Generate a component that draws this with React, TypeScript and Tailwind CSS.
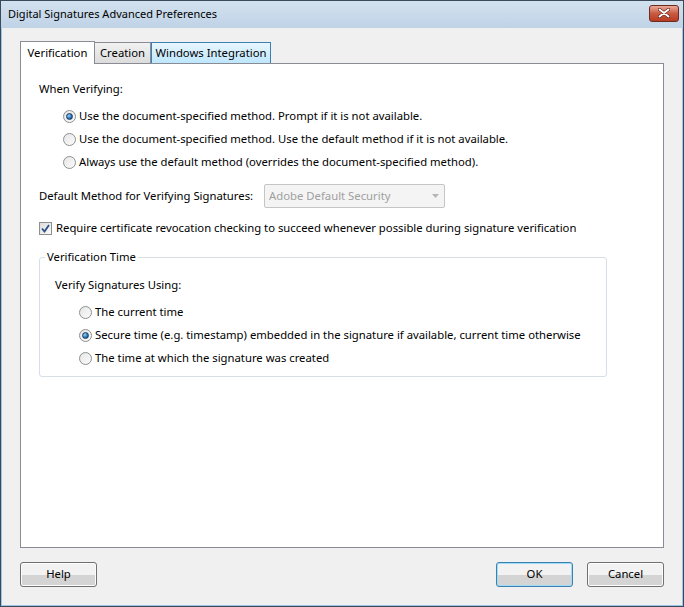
import React from "react";

function Radio({ checked }: { checked?: boolean }) {
  return (
    <span className="inline-flex h-[13px] w-[13px] shrink-0 items-center justify-center rounded-full border border-[#8e8f8f] bg-gradient-to-br from-[#e6e6e6] to-[#fbfbfb]">
      {checked ? (
        <span className="h-[7px] w-[7px] rounded-full border border-[#1b3e63] bg-[radial-gradient(circle_at_35%_35%,#9fd2f5,#1f6fb4_60%,#0d3f74)]" />
      ) : null}
    </span>
  );
}

function RadioRow({ checked, label }: { checked?: boolean; label: string }) {
  return (
    <div className="flex h-[23px] items-center gap-[3px] whitespace-nowrap">
      <Radio checked={checked} />
      <span>{label}</span>
    </div>
  );
}

function Btn({ label, focused }: { label: string; focused?: boolean }) {
  return (
    <button
      className={
        "flex h-[25px] w-[77px] items-center justify-center rounded-[3px] border bg-gradient-to-b from-[#f2f2f2] from-50% to-[#d4d4d4] to-50% text-black " +
        (focused ? "border-[#3c7fb1] shadow-[inset_0_0_0_1px_#9fdcf6]" : "border-[#707070] shadow-[inset_0_0_0_1px_#fcfcfc]")
      }
    >
      {label}
    </button>
  );
}

export default function App() {
  return (
    <div
      className="flex h-[607px] w-[684px] flex-col border border-[#3a4a5a] bg-[#f0f0f0] text-[11.3px] text-black"
      style={{ fontFamily: '"Noto Sans", "Open Sans", sans-serif' }}
    >
      {/* title bar */}
      <div className="flex h-[27px] items-center justify-between bg-gradient-to-b from-[#d3e1ee] to-[#bfd3e7] pl-[7px] pr-[4px]">
        <span className="text-[11px]">Digital Signatures Advanced Preferences</span>
        <div className="mb-[3px] flex h-[17px] w-[30px] items-center justify-center rounded-[3px] border border-[#6d2a1d] bg-gradient-to-b from-[#e9a99a] via-[#c95a41] to-[#b83b22]">
          <svg width="12" height="10" viewBox="0 0 12 10">
            <path d="M1.5 1.5 L10.5 8.5 M10.5 1.5 L1.5 8.5" stroke="#5a1e12" strokeWidth="3.2" strokeLinecap="round" />
            <path d="M1.5 1.5 L10.5 8.5 M10.5 1.5 L1.5 8.5" stroke="#ffffff" strokeWidth="2" strokeLinecap="round" />
          </svg>
        </div>
      </div>

      <div className="flex flex-1 flex-col border-x border-b border-[#9bc5e6] px-[18px] pb-[18px] pt-[13px]">
        {/* tabs */}
        <div className="relative z-10 flex items-end">
          <div className="-mb-px flex h-[23px] w-[75px] items-center justify-center border border-b-0 border-[#898c95] bg-white">
            Verification
          </div>
          <div className="flex h-[21px] w-[56px] items-center justify-center border border-l-0 border-b-0 border-[#898c95] bg-gradient-to-b from-[#f2f2f2] to-[#dcdcdc]">
            Creation
          </div>
          <div className="flex h-[21px] w-[120px] items-center justify-center border border-b-0 border-[#3c7fb1] bg-gradient-to-b from-[#e9f6fd] to-[#bde6fd]">
            Windows Integration
          </div>
        </div>

        {/* panel */}
        <div className="h-[485px] w-[644px] border border-[#898c95] bg-white pl-[18px] pt-[15px]">
          <div className="h-[20px] leading-[20px]">When Verifying:</div>
          <div className="mt-[6px] pl-[24px]">
            <RadioRow checked label="Use the document-specified method. Prompt if it is not available." />
            <RadioRow label="Use the document-specified method. Use the default method if it is not available." />
            <RadioRow label="Always use the default method (overrides the document-specified method)." />
          </div>

          <div className="mt-[10px] flex items-center gap-[11px]">
            <span>Default Method for Verifying Signatures:</span>
            <div className="flex h-[24px] w-[181px] items-center justify-between rounded-[2px] border border-[#c5c5c5] bg-[#f4f4f4] pl-[4px] pr-[5px] text-[#a0a0a0]">
              <span>Adobe Default Security</span>
              <svg width="7" height="4" viewBox="0 0 7 4">
                <path d="M0 0 L7 0 L3.5 4 Z" fill="#b5b5b5" />
              </svg>
            </div>
          </div>

          <div className="mt-[10px] flex h-[20px] items-center gap-[4px] whitespace-nowrap">
            <span className="flex h-[13px] w-[13px] items-center justify-center border border-[#8e8f8f] bg-gradient-to-br from-[#dcdcdc] to-[#fafafa]">
              <svg width="9" height="9" viewBox="0 0 9 9">
                <path d="M1 4.5 L3.5 7.5 L8 1" fill="none" stroke="#2a4e86" strokeWidth="1.8" />
              </svg>
            </span>
            <span>Require certificate revocation checking to succeed whenever possible during signature verification</span>
          </div>

          {/* group box */}
          <div className="relative mt-[19px] h-[120px] w-[568px] rounded-[3px] border border-[#d5dfe5] pl-[15px] pt-[17px]">
            <span className="absolute -top-[10px] left-[5px] bg-white px-[2px] leading-[18px]">Verification Time</span>
            <div className="h-[20px] leading-[20px]">Verify Signatures Using:</div>
            <div className="mt-[6px] pl-[24px]">
              <RadioRow label="The current time" />
              <RadioRow checked label="Secure time (e.g. timestamp) embedded in the signature if available, current time otherwise" />
              <RadioRow label="The time at which the signature was created" />
            </div>
          </div>
        </div>

        {/* buttons */}
        <div className="mt-[14px] flex items-center">
          <Btn label="Help" />
          <div className="flex-1" />
          <Btn label="OK" focused />
          <div className="w-[14px]" />
          <Btn label="Cancel" />
        </div>
      </div>
    </div>
  );
}
